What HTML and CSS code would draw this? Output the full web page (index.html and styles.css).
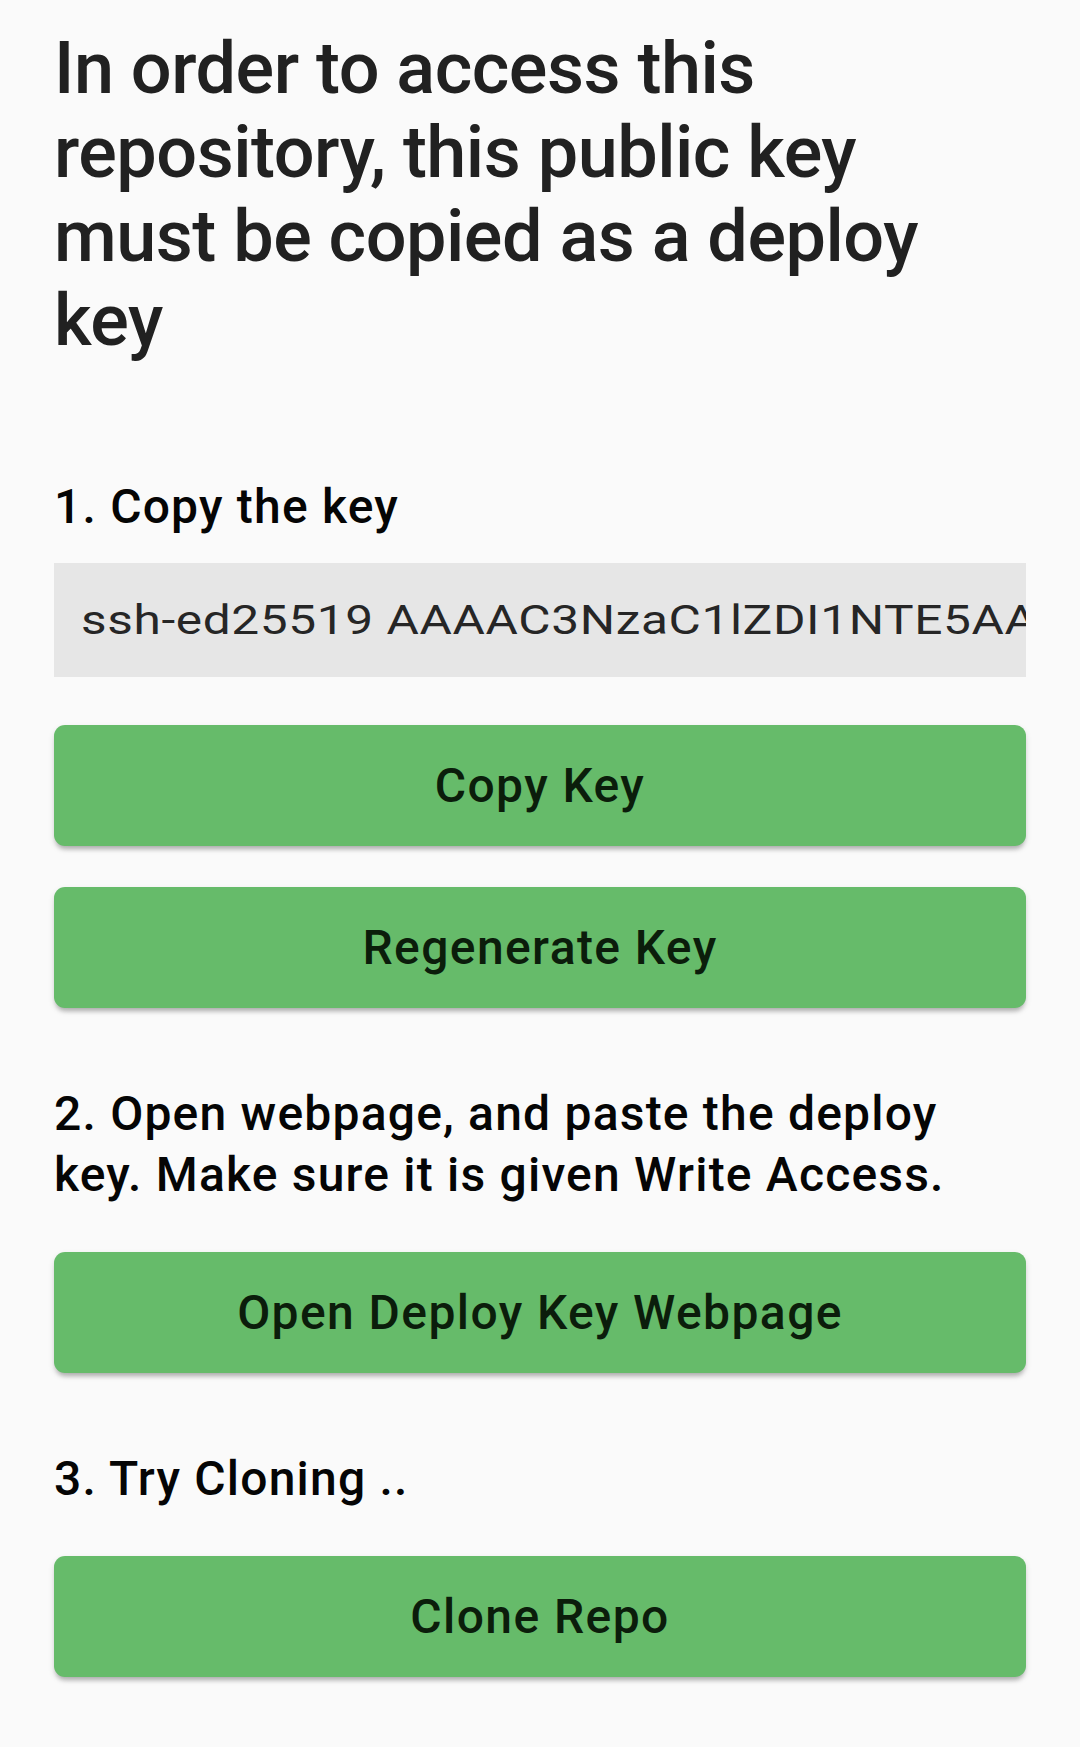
FILE: index.html
```html
<!DOCTYPE html>
<html lang="en">
<head>
<meta charset="utf-8">
<title>Deploy Key</title>
<link rel="stylesheet" href="styles.css">
</head>
<body>
<main class="page">
  <h1 class="title">In order to access this repository, this public key must be copied as a deploy key</h1>

  <p class="step step-first">1. Copy the key</p>
  <div class="key-box">
    <span class="key-text">ssh-ed25519 AAAAC3NzaC1lZDI1NTE5AAAAIHk8hQn3xP0qS2v7mWcR4tJdLzYbF6gNeU1oKsA9iVrX gitjournal</span>
  </div>
  <button class="btn btn-after-box">Copy Key</button>
  <button class="btn btn-stacked">Regenerate Key</button>

  <p class="step">2. Open webpage, and paste the deploy key. Make sure it is given Write Access.</p>
  <button class="btn">Open Deploy Key Webpage</button>

  <p class="step">3. Try Cloning ..</p>
  <button class="btn">Clone Repo</button>
</main>
</body>
</html>
```

FILE: styles.css
```css
html, body {
  margin: 0;
  padding: 0;
  background: #fafafa;
}

.page {
  display: flex;
  flex-direction: column;
  padding: 27px 54px 60px 54px;
  font-family: Roboto, "Noto Sans", "Liberation Sans", sans-serif;
}

.title {
  margin: 0;
  font-size: 72px;
  font-weight: 500;
  line-height: 84px;
  color: #212121;
  letter-spacing: -0.5px;
}

.step {
  margin: 75px 0 47px 0;
  font-size: 48px;
  font-weight: 500;
  line-height: 61px;
  color: #050505;
  letter-spacing: 1.2px;
}

.step-first {
  margin-top: 113px;
  margin-bottom: 26px;
}

.key-box {
  height: 114px;
  background: #e6e6e6;
  display: flex;
  align-items: center;
  overflow: hidden;
  white-space: nowrap;
  padding-left: 27px;
}

.key-text {
  display: inline-block;
  font-size: 40px;
  font-weight: 400;
  color: #262626;
  letter-spacing: 0.5px;
  transform: scaleX(1.24);
  transform-origin: left center;
}

.btn {
  display: block;
  width: 100%;
  height: 121px;
  border: none;
  border-radius: 11px;
  background: #66bb6a;
  color: #0b1d0b;
  font-family: Roboto, "Noto Sans", "Liberation Sans", sans-serif;
  font-size: 48px;
  font-weight: 500;
  letter-spacing: 1.4px;
  box-shadow: 0 5px 4px -2px rgba(0, 0, 0, 0.22), 0 3px 6px rgba(0, 0, 0, 0.12);
  padding: 0;
}

.btn-after-box {
  margin-top: 48px;
}

.btn-stacked {
  margin-top: 41px;
}
```
